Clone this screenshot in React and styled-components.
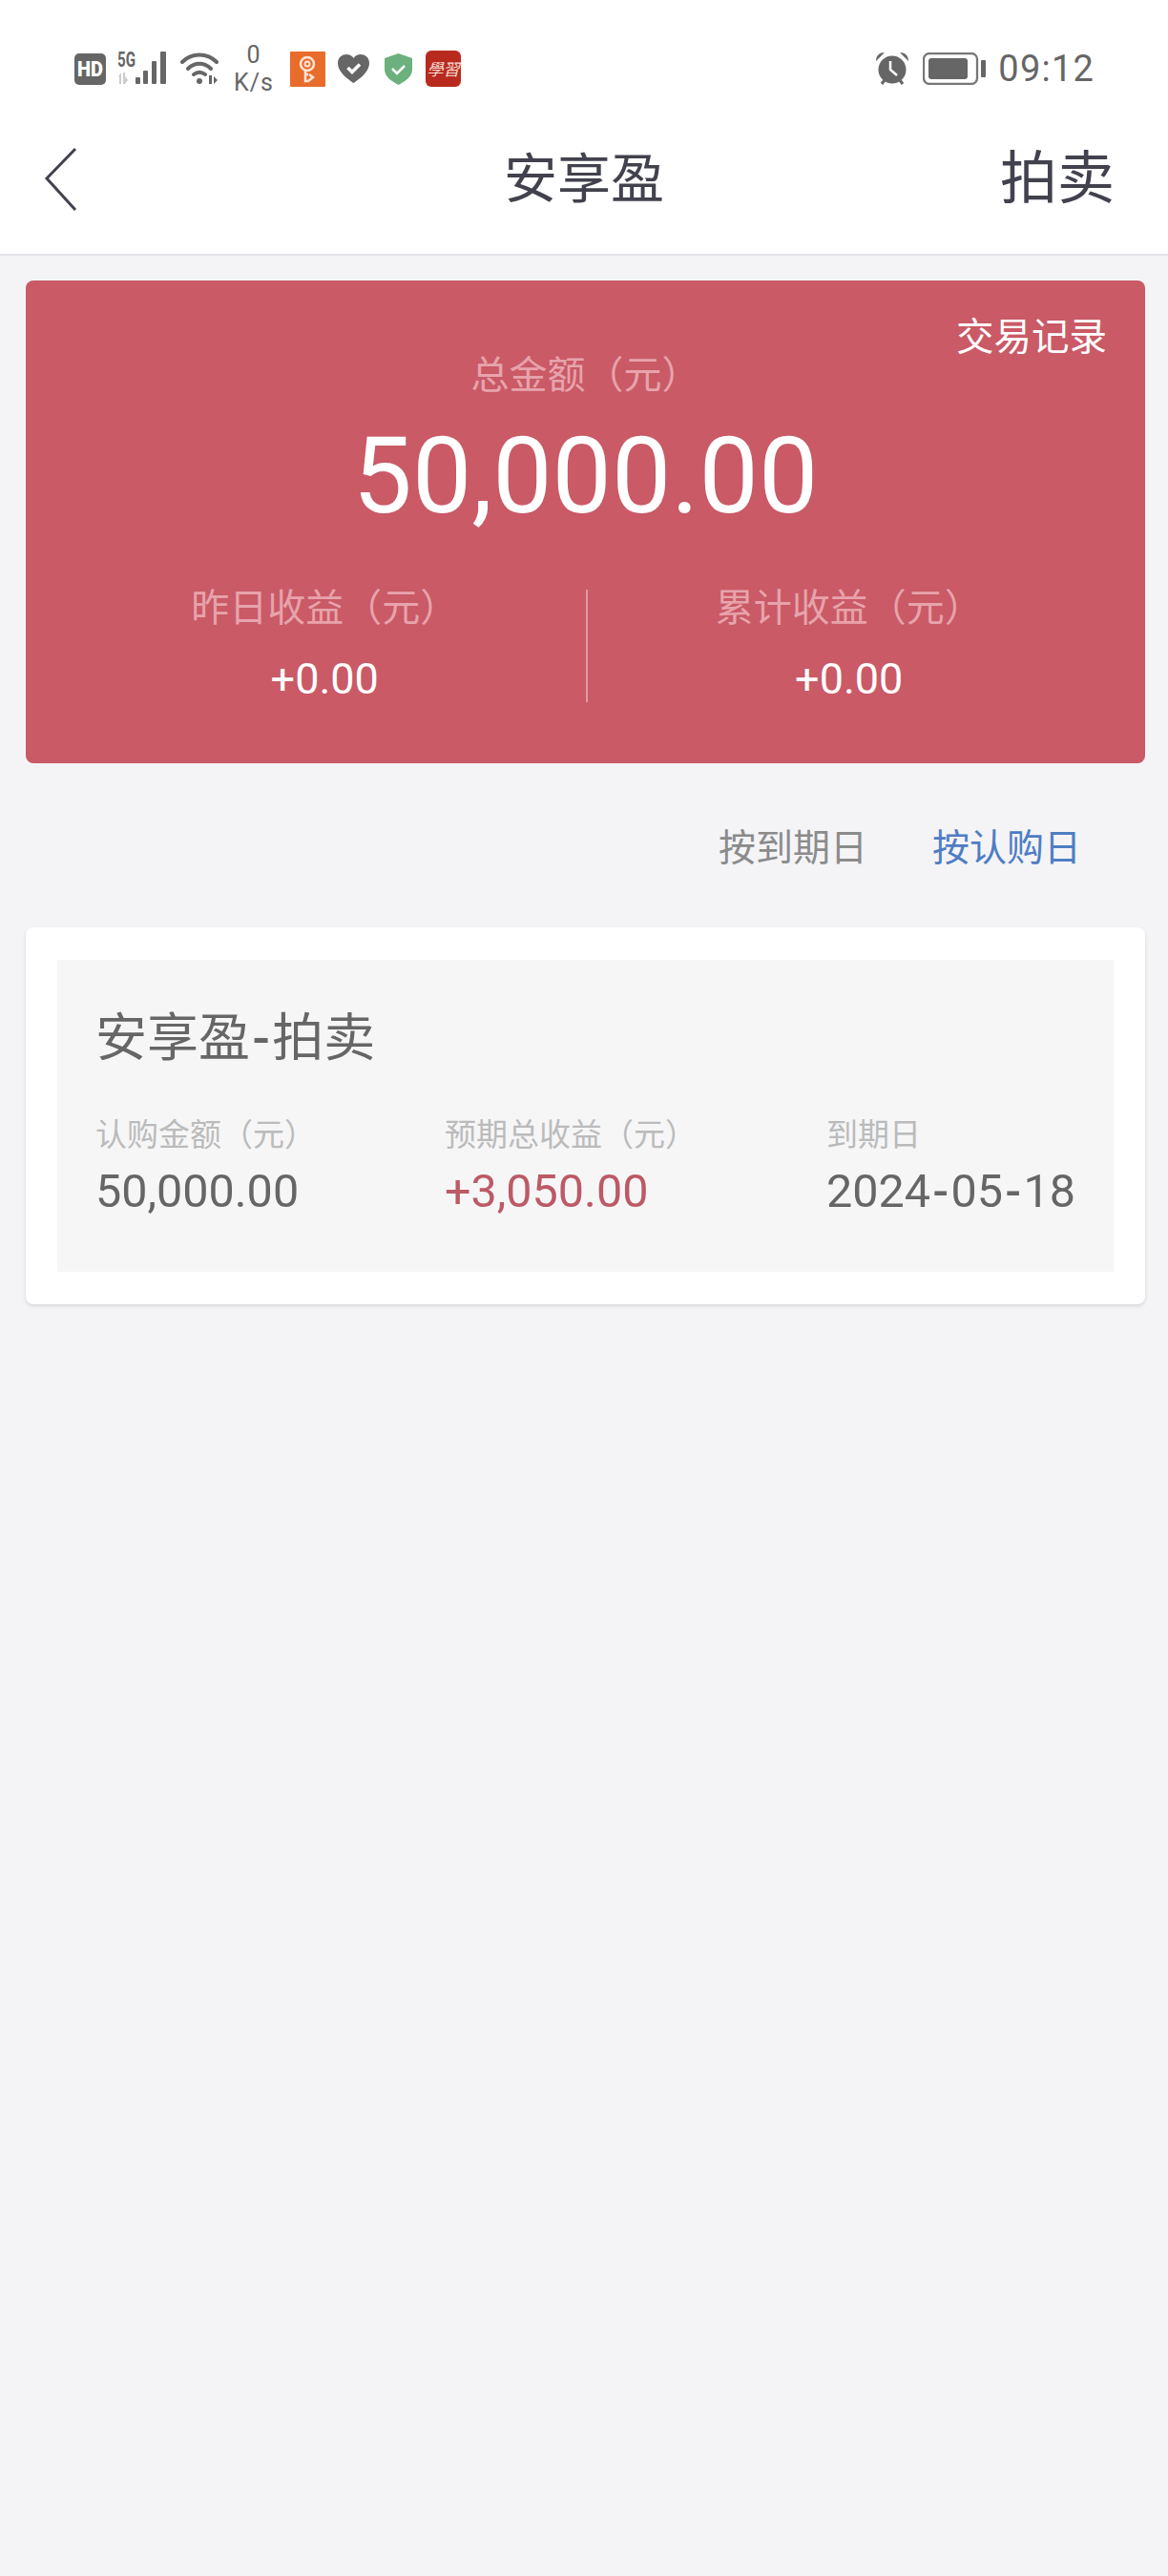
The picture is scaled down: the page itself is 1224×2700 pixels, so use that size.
import styled, { createGlobalStyle } from "styled-components";

const GlobalStyle = createGlobalStyle`
  html, body {
    margin: 0;
    padding: 0;
    background: #f4f4f7;
  }
  body {
    font-family: Roboto, "Noto Sans CJK SC", sans-serif;
  }
`;

const Page = styled.div`
  width: 1224px;
  height: 2700px;
  background: #f4f4f7;
  overflow: hidden;
`;

const Header = styled.header`
  height: 266px;
  background: #fff;
  border-bottom: 2px solid #e4e4e8;
  box-sizing: content-box;
`;

const StatusBar = styled.div`
  height: 144px;
  padding: 0 77px 0 78px;
  display: flex;
  justify-content: space-between;
  align-items: center;
  color: #666;
`;

const StatusGroup = styled.div`
  display: flex;
  align-items: center;
`;

const StatusIcon = styled.svg`
  display: block;
  flex: none;
  margin-left: ${(p) => p.$gap || 0}px;
`;

const Speed = styled.div`
  width: 44px;
  margin: 0 16px 0 15px;
  font-size: 25px;
  line-height: 29px;
  text-align: center;
  white-space: nowrap;
  letter-spacing: 1px;
`;

const Stamp = styled.div`
  width: 37px;
  height: 38px;
  margin-left: 14px;
  background: #b92a1e;
  border-radius: 6px;
  color: #f6dcd4;
  font-family: "Noto Sans CJK TC", serif;
  font-size: 17px;
  line-height: 38px;
  text-align: center;
  font-style: italic;
  white-space: nowrap;
`;

const Clock = styled.div`
  margin-left: 13px;
  font-size: 38px;
  letter-spacing: 1.2px;
  line-height: 40px;
`;

const NavBar = styled.div`
  height: 122px;
  padding: 0 46px;
  display: grid;
  grid-template-columns: 1fr auto 1fr;
  align-items: start;
  color: #42424e;
`;

const BackIcon = styled.svg`
  display: block;
  margin-top: 10px;
`;

const NavTitle = styled.div`
  font-size: 56px;
  line-height: 88px;
`;

const NavAction = styled.div`
  justify-self: end;
  margin-right: 10px;
  font-size: 60px;
  line-height: 88px;
`;

const Content = styled.main`
  padding: 26px 24px 0 27px;
`;

const Hero = styled.section`
  position: relative;
  height: 506px;
  background: #c95a66;
  border-radius: 8px;
  color: #fff;
  text-align: center;
  box-sizing: border-box;
  padding-top: 72px;
`;

const HistoryLink = styled.a`
  position: absolute;
  top: 32px;
  right: 40px;
  font-size: 39.5px;
  line-height: 56px;
`;

const HeroLabel = styled.div`
  font-size: 40px;
  line-height: 56px;
  color: #e7a3ab;
`;

const HeroAmount = styled.div`
  font-size: 111px;
  line-height: 130px;
  margin-top: 12px;
`;

const HeroStats = styled.div`
  display: flex;
  margin-top: 54px;
`;

const HeroStat = styled.div`
  flex: none;
  width: 50%;
  height: 118px;
  box-sizing: border-box;
  padding: ${(p) => (p.$divided ? "0 36px 0 0" : "0 0 0 40px")};
  border-left: ${(p) => (p.$divided ? "2px solid #e09aa2" : "none")};
`;

const StatLabel = styled.div`
  font-size: 40px;
  line-height: 40px;
  color: #e7a3ab;
`;

const StatValue = styled.div`
  font-size: 45px;
  line-height: 50px;
  margin-top: 29px;
`;

const Tabs = styled.nav`
  display: flex;
  justify-content: flex-end;
  gap: 68px;
  height: 172px;
  box-sizing: border-box;
  padding: 0 67px 2px 0;
  align-items: center;
`;

const Tab = styled.span`
  font-size: 39px;
  color: ${(p) => (p.$active ? "#4f7dc4" : "#8b8b8b")};
`;

const Card = styled.section`
  background: #fff;
  border-radius: 8px;
  box-shadow: 0 2px 4px rgba(0, 0, 0, 0.12);
  padding: 34px 33px;
`;

const Order = styled.div`
  height: 327px;
  background: #f6f6f7;
  box-sizing: border-box;
  padding: 43px 40px 0;
  color: #666;
`;

const OrderTitle = styled.div`
  font-size: 54px;
  line-height: 80px;
`;

const OrderRow = styled.div`
  display: grid;
  grid-template-columns: 366px 400px auto;
  margin-top: 38px;
`;

const FieldLabel = styled.div`
  font-size: 33px;
  line-height: 46px;
  color: #bbb;
`;

const FieldValue = styled.div`
  font-size: 48.5px;
  line-height: 56px;
  margin-top: 8px;
  white-space: nowrap;
  color: ${(p) => (p.$profit ? "#bc5a66" : "#666")};
`;

const Dash = styled.span`
  padding: 0 2.5px;
  font-weight: 500;
`;

const Signal = () => (
  <StatusIcon $gap={12} width="56" height="48" viewBox="0 -6 56 48">
    <text x="0" y="16" fontSize="22" fontWeight="700" fill="#666" fontFamily="Roboto" textLength="19" lengthAdjust="spacingAndGlyphs">5G</text>
    <path d="M1 26 l3 -4 v12 h-2 v-8 z M6 22 h2 v4 l3 4 l-3 4 h-2 z" fill="#ccc" />
    <rect x="19" y="27" width="5" height="7" rx="1" fill="#666" />
    <rect x="27" y="20" width="5" height="14" rx="1" fill="#666" />
    <rect x="36" y="10" width="5" height="24" rx="1" fill="#666" />
    <rect x="45" y="0" width="6" height="34" rx="1" fill="#666" />
  </StatusIcon>
);

const App = () => {
  return (
    <Page>
      <GlobalStyle />
      <Header>
        <StatusBar>
          <StatusGroup>
            <StatusIcon width="33" height="33" viewBox="0 0 33 33">
              <rect width="33" height="33" rx="5" fill="#666" />
              <text x="16.5" y="24" textAnchor="middle" fontSize="22" fontWeight="900" fill="#fff" fontFamily="Roboto" textLength="27" lengthAdjust="spacingAndGlyphs">HD</text>
            </StatusIcon>
            <Signal />
            <StatusIcon $gap={10} width="40" height="36" viewBox="0 0 40 36">
              <path d="M2 11 C12 1 28 1 38 11" fill="none" stroke="#666" strokeWidth="4" strokeLinecap="round" />
              <path d="M8 18 C15 11 25 11 32 18" fill="none" stroke="#666" strokeWidth="4" strokeLinecap="round" />
              <path d="M14 24 C18 21 22 21 26 24" fill="none" stroke="#666" strokeWidth="4" strokeLinecap="round" />
              <circle cx="20" cy="31" r="3" fill="#666" />
              <path d="M30 25 h3 v9 h-3 z M35 26 l4 4 l-4 4 z" fill="#666" />
            </StatusIcon>
            <Speed>
              0
              <br />
              K/s
            </Speed>
            <StatusIcon width="37" height="37" viewBox="0 0 37 37">
              <rect width="37" height="37" rx="1" fill="#e86c2c" />
              <circle cx="18" cy="13" r="7" fill="none" stroke="#fbe5d5" strokeWidth="2.5" />
              <circle cx="18" cy="13" r="2.5" fill="none" stroke="#fbe5d5" strokeWidth="2" />
              <path d="M16 20 v11 h3 l5 -4 l-4 -3 M16 24 h3" fill="none" stroke="#fbe5d5" strokeWidth="2.5" />
            </StatusIcon>
            <StatusIcon $gap={13} width="33" height="30" viewBox="0 0 33 30">
              <path d="M16.5 30 C12 27 0 19 0 9 C0 3 5 0 9 0 C12 0 15 1.500 16.5 4 C18 1.500 21 0 24 0 C28 0 33 3 33 9 C33 19 21 27 16.5 30 Z" fill="#666" />
              <path d="M10.500 14 L15 18.500 L23 10.500" fill="none" stroke="#fff" strokeWidth="3.500" />
            </StatusIcon>
            <StatusIcon $gap={16} width="29" height="33" viewBox="0 0 29 33">
              <path d="M14.500 0 L29 5 V17 C29 25 20 30 14.500 33 C9 30 0 25 0 17 V5 Z" fill="#6bb07d" />
              <path d="M8 16 L13 21 L21 13" fill="none" stroke="#fff" strokeWidth="2.500" />
            </StatusIcon>
            <Stamp>學習</Stamp>
          </StatusGroup>
          <StatusGroup>
            <StatusIcon width="34" height="34" viewBox="0 0 34 34">
              <circle cx="17" cy="18" r="14.500" fill="#666" />
              <path d="M15 9 V18 L22 24" fill="none" stroke="#fff" strokeWidth="2.500" />
              <path d="M0 9 C0 3 4 0 9 0 Z M34 9 C34 3 30 0 25 0 Z" fill="#666" />
              <path d="M6 33 L9 29 M28 33 L25 29" stroke="#666" strokeWidth="3" />
            </StatusIcon>
            <StatusIcon $gap={15} width="66" height="34" viewBox="0 0 66 34">
              <rect x="1" y="1" width="56" height="32" rx="6" fill="none" stroke="#777" strokeWidth="2.300" />
              <rect x="6" y="6" width="41" height="22" rx="3" fill="#666" />
              <rect x="61" y="8" width="5" height="18" rx="1" fill="#666" />
            </StatusIcon>
            <Clock>09:12</Clock>
          </StatusGroup>
        </StatusBar>
        <NavBar>
          <BackIcon width="36" height="68" viewBox="0 0 36 68">
            <path d="M33 2 L3 33 L33 66" fill="none" stroke="#42424e" strokeWidth="3" />
          </BackIcon>
          <NavTitle>安享盈</NavTitle>
          <NavAction>拍卖</NavAction>
        </NavBar>
      </Header>
      <Content>
        <Hero>
          <HistoryLink>交易记录</HistoryLink>
          <HeroLabel>总金额（元）</HeroLabel>
          <HeroAmount>50,000.00</HeroAmount>
          <HeroStats>
            <HeroStat>
              <StatLabel>昨日收益（元）</StatLabel>
              <StatValue>+0.00</StatValue>
            </HeroStat>
            <HeroStat $divided>
              <StatLabel>累计收益（元）</StatLabel>
              <StatValue>+0.00</StatValue>
            </HeroStat>
          </HeroStats>
        </Hero>
        <Tabs>
          <Tab>按到期日</Tab>
          <Tab $active>按认购日</Tab>
        </Tabs>
        <Card>
          <Order>
            <OrderTitle>安享盈<Dash>-</Dash>拍卖</OrderTitle>
            <OrderRow>
              <div>
                <FieldLabel>认购金额（元）</FieldLabel>
                <FieldValue>50,000.00</FieldValue>
              </div>
              <div>
                <FieldLabel>预期总收益（元）</FieldLabel>
                <FieldValue $profit>+3,050.00</FieldValue>
              </div>
              <div>
                <FieldLabel>到期日</FieldLabel>
                <FieldValue>2024<Dash>-</Dash>05<Dash>-</Dash>18</FieldValue>
              </div>
            </OrderRow>
          </Order>
        </Card>
      </Content>
    </Page>
  );
};

export default App;
